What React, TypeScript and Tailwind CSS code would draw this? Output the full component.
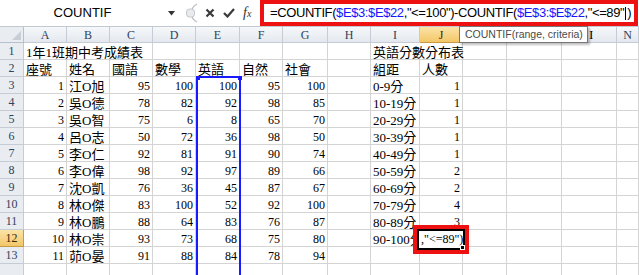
import React from 'react';

const colLetters = ['A', 'B', 'C', 'D', 'E', 'F', 'G', 'H', 'I', 'J', 'K', 'L', 'M', 'N'];
// K, L sit under the tooltip and M under the mouse cursor
const hiddenLetters = ['K', 'L', 'M'];

// columns A..N; true = right aligned (numbers)
const rightCols = [true, false, true, true, true, true, true, false, false, true, false, false, false, false];

const rows = [
  ['座號', '姓名', '國語', '數學', '英語', '自然', '社會', '', '組距', '人數'],
  ['1', '江O旭', '95', '100', '100', '95', '100', '', '0-9分', '1'],
  ['2', '吳O德', '78', '82', '92', '98', '85', '', '10-19分', '1'],
  ['3', '吳O智', '75', '6', '8', '65', '70', '', '20-29分', '1'],
  ['4', '呂O志', '50', '72', '36', '98', '50', '', '30-39分', '1'],
  ['5', '李O仁', '92', '81', '91', '90', '74', '', '40-49分', '1'],
  ['6', '李O偉', '98', '92', '97', '89', '66', '', '50-59分', '2'],
  ['7', '沈O凱', '76', '36', '45', '87', '67', '', '60-69分', '2'],
  ['8', '林O傑', '83', '100', '52', '92', '100', '', '70-79分', '4'],
  ['9', '林O鵬', '88', '64', '83', '76', '87', '', '80-89分', '3'],
  ['10', '林O崇', '93', '73', '68', '75', '80', '', '90-100分', ''],
  ['11', '茆O晏', '91', '88', '84', '78', '94', '', '', ''],
  ['', '', '', '', '', '', '', '', '', ''],
];

const gridCols =
  'grid grid-cols-[24px_43px_43px_43px_43px_44px_43px_45px_43px_49px_43px_44px_55px_55px_22px]';

const Cell = ({ v, right, span }: { v: string; right?: boolean; span?: number }) => (
  <div
    className={`h-[17px] border-r border-b border-[#d4d4d4] whitespace-nowrap pt-[2px] leading-[15px] text-black ${
      right ? 'text-right pr-[2px] text-[12px]' : 'pl-[2px] text-[13px]'
    } ${span === 3 ? 'col-span-3' : span === 2 ? 'col-span-2' : ''}`}
  >
    {v}
  </div>
);

const RowHead = ({ n, active }: { n: number; active?: boolean }) => (
  <div
    className={`h-[17px] border-r border-b text-center text-[12px] leading-[17px] ${
      active
        ? 'bg-gradient-to-b from-[#fbe3a6] to-[#f3c767] border-[#c99a45] text-[#3b2a10]'
        : 'bg-[#e9edf2] border-[#c5ccd6] text-[#30415a]'
    }`}
  >
    {n < 14 ? n : ''}
  </div>
);

const FormulaBar = () => (
  <div className="h-[27px] flex items-stretch bg-white border-b border-[#c3c9d1]">
    <div className="w-[180px] flex items-center">
      <span className="w-[165px] text-center text-[13px] text-black font-['Liberation_Sans',sans-serif]">COUNTIF</span>
      <svg width="8" height="5" viewBox="0 0 8 5" className="ml-[3px]">
        <path d="M0 0 H7 L3.5 4.5 Z" fill="#333" />
      </svg>
    </div>
    <div className="w-[80px] flex items-center pl-[2px]">
      <svg width="16" height="20" viewBox="0 0 16 20">
        <path d="M15 1 A10 10 0 0 0 15 19" fill="none" stroke="#b8bcc2" strokeWidth="1.2" />
        <rect x="4.5" y="6" width="8" height="8" rx="3" fill="#e8eaed" stroke="#c4c8ce" />
      </svg>
      <svg width="10" height="10" viewBox="0 0 10 10" className="ml-[7px]">
        <path d="M1.5 1.5 L8.5 8.5 M8.5 1.5 L1.5 8.5" stroke="#3a3a3a" strokeWidth="2.2" />
      </svg>
      <svg width="12" height="10" viewBox="0 0 12 10" className="ml-[8px]">
        <path d="M1 5 L4.5 8.5 L11 1" fill="none" stroke="#3a3a3a" strokeWidth="2.2" />
      </svg>
      <span className="ml-[8px] italic font-['Liberation_Serif',serif] text-[14px] text-[#333] leading-none">
        f<span className="text-[10px]">x</span>
      </span>
    </div>
    <div className="w-[378px] border-4 border-[#ee1111] flex items-center pl-[6px] text-[13px] tracking-[-0.4px] text-black font-['Liberation_Sans',sans-serif] whitespace-nowrap overflow-hidden">
      =COUNTIF(<span className="text-[#1414ff]">$E$3:$E$22</span>,"&lt;=100")-COUNTIF(
      <span className="text-[#1414ff]">$E$3:$E$22</span>,"&lt;=89"
      <span className="inline-block w-px h-[13px] bg-black mx-[1px]" />)
    </div>
    <div className="w-px" />
  </div>
);

export default function App() {
  return (
    <div className="relative w-[639px] h-[275px] overflow-hidden bg-white font-['Liberation_Serif','Noto_Sans_CJK_TC',serif]">
      <FormulaBar />
      <div className={`relative ${gridCols}`}>
        {/* header row */}
        <div className="h-[16px] bg-[#e9edf2] border-r border-b border-[#b6bfcb] relative">
          <svg width="9" height="9" viewBox="0 0 9 9" className="absolute right-[2px] bottom-[2px]">
            <path d="M9 0 V9 H0 Z" fill="#c9ced6" />
          </svg>
        </div>
        {colLetters.map((c) => (
          <div
            key={c}
            className={`h-[16px] border-r border-b text-center text-[12px] leading-[16px] ${
              c === 'J'
                ? 'bg-gradient-to-b from-[#fbe3a6] to-[#f3c767] border-[#c99a45] text-[#3b2a10]'
                : 'bg-gradient-to-b from-[#f6f8fa] to-[#e4e8ee] border-[#c5ccd6] text-[#30415a]'
            }`}
          >
            {hiddenLetters.includes(c) ? '' : c}
          </div>
        ))}

        {/* row 1 */}
        <RowHead n={1} />
        <Cell v="1年1班期中考成績表" span={3} />
        <Cell v="" />
        <Cell v="" />
        <Cell v="" />
        <Cell v="" />
        <Cell v="" />
        <Cell v="英語分數分布表" span={2} />
        <Cell v="" />
        <Cell v="" />
        <Cell v="" />
        <Cell v="" />

        {rows.map((r, i) => {
          const n = i + 2;
          return (
            <React.Fragment key={n}>
              <RowHead n={n} active={n === 12} />
              {colLetters.map((_, ci) => (
                <Cell key={ci} v={r[ci] ?? ''} right={i > 0 && rightCols[ci]} />
              ))}
            </React.Fragment>
          );
        })}

        {/* referenced range E3:E22 */}
        <div className="absolute left-[196px] top-[49px] w-[45px] h-[300px] border-2 border-[#1a1aff]">
          <div className="absolute -left-[2px] -top-[2px] w-[4px] h-[4px] bg-[#1a1aff]" />
          <div className="absolute -right-[3px] -top-[2px] w-[4px] h-[4px] bg-[#1a1aff]" />
        </div>

        {/* J12 being edited */}
        <div className="absolute left-[413px] top-[198px] w-[56px] h-[29px] border-4 border-[#ee1111]">
          <div className="relative w-full h-full border-2 border-black bg-white text-[12px] leading-[16px] pl-[2px] whitespace-nowrap">
            ,"&lt;=89")
            <div className="absolute -right-[2px] -bottom-[2px] w-[5px] h-[5px] bg-black border border-white" />
          </div>
        </div>
      </div>

      {/* function tooltip */}
      <div className="absolute left-[459px] top-[26px] w-[129px] h-[17px] bg-white border border-[#767676] shadow-[2px_2px_2px_rgba(0,0,0,0.25)] pl-[5px] text-[10.5px] leading-[15px] text-[#4a4a4a] font-['Liberation_Sans',sans-serif] whitespace-nowrap">
        COUNTIF(range, criteria)
      </div>
      <div className="absolute left-[589px] top-[28px] text-[13px] leading-[14px] text-black">I</div>
    </div>
  );
}
